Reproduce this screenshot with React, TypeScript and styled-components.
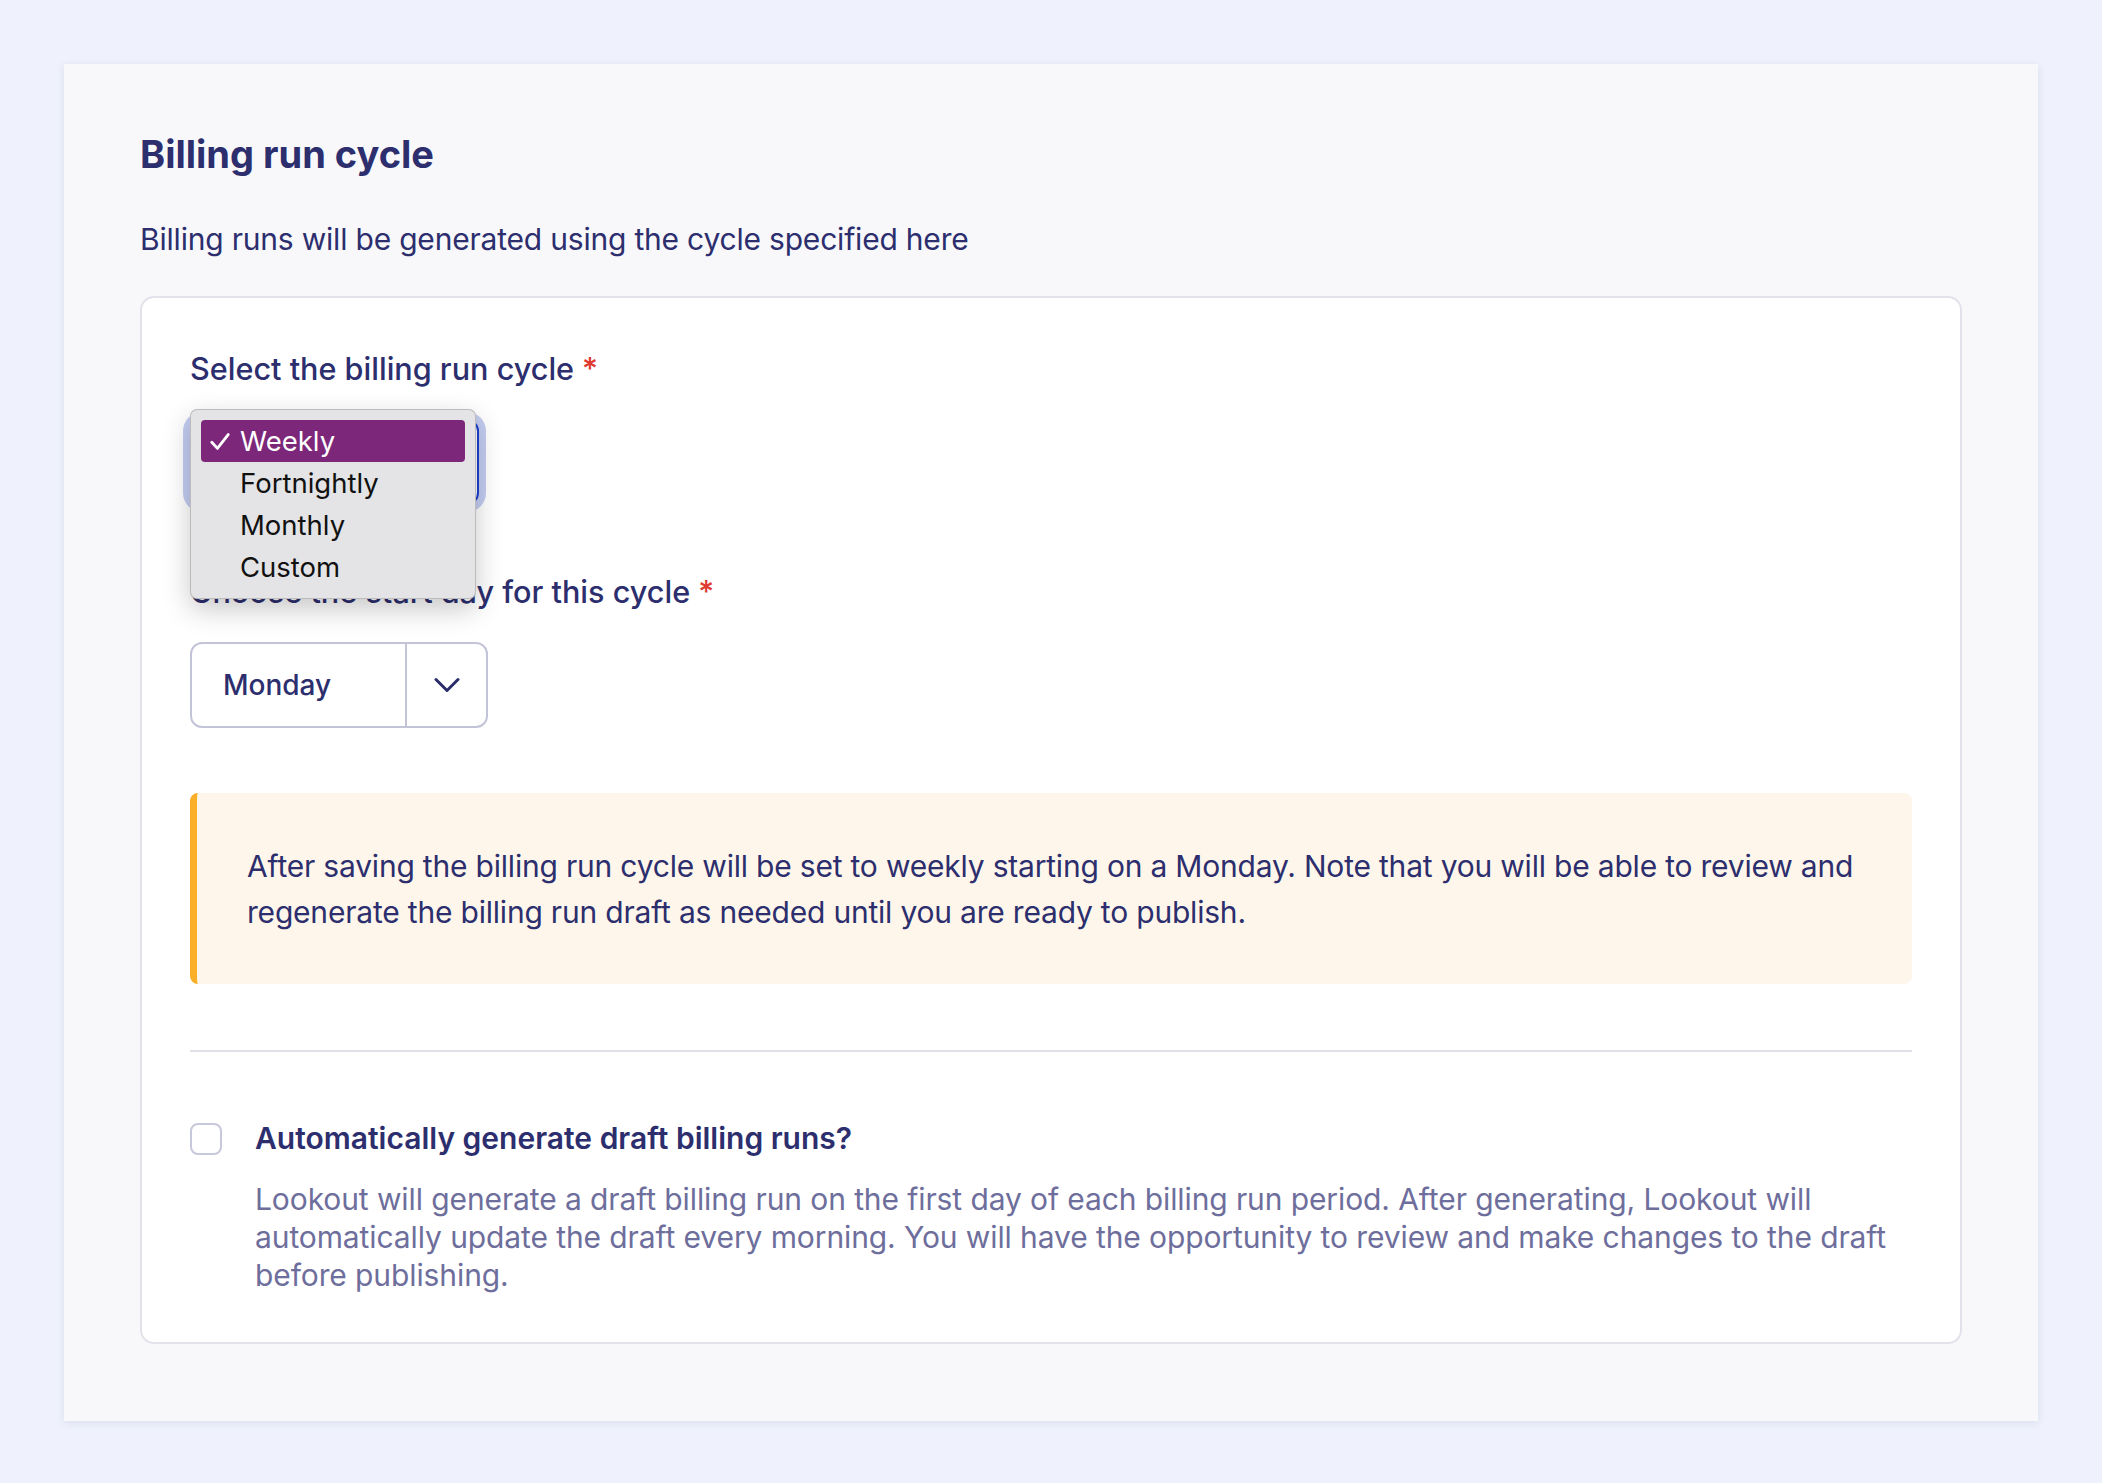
import React from 'react';
import styled, { createGlobalStyle } from 'styled-components';

const GlobalStyle = createGlobalStyle`
  html, body {
    margin: 0;
    padding: 0;
  }
  body {
    background: #eff2fc;
    font-family: Inter, "Noto Sans", sans-serif;
    color: #2c2e6e;
    -webkit-font-smoothing: antialiased;
  }
`;

const Page = styled.div`
  padding: 64px;
`;

const Panel = styled.section`
  background: #f8f8fb;
  box-shadow: 0 2px 8px rgba(40, 50, 120, 0.1);
  padding: 67px 76px 77px;
`;

const Title = styled.h2`
  margin: 0;
  font-size: 38px;
  line-height: 46px;
  font-weight: 700;
`;

const Subtitle = styled.p`
  margin: 42px 0 0;
  font-size: 30px;
  line-height: 40px;
  letter-spacing: -0.2px;
`;

const Card = styled.div`
  margin-top: 37px;
  background: #fff;
  border: 2px solid #e2e2eb;
  border-radius: 14px;
  padding: 51px 48px 48px;
`;

const Field = styled.div`
  display: flex;
  flex-direction: column;
  align-items: flex-start;
  gap: 30px;

  & + & {
    margin-top: 67px;
  }
`;

const Label = styled.label`
  font-size: 30.6px;
  line-height: 40px;
  font-weight: 500;
`;

const Required = styled.span`
  color: #e0392f;
  margin-left: 8px;
`;

const SelectWrap = styled.div`
  position: relative;
`;

const SelectBox = styled.div<{ $width: number; $focused?: boolean }>`
  box-sizing: border-box;
  width: ${({ $width }) => $width}px;
  height: 86px;
  display: grid;
  grid-template-columns: 1fr 79px;
  background: #fff;
  border: 2px solid ${({ $focused }) => ($focused ? '#1d3fd0' : '#c4c4d9')};
  border-radius: 12px;
  box-shadow: ${({ $focused }) => ($focused ? '0 0 0 7px #c3cdf1' : 'none')};
`;

const SelectValue = styled.span`
  display: flex;
  align-items: center;
  padding-left: 31px;
  font-size: 28px;
  font-weight: 500;
  border-right: 2px solid #c4c4d9;
`;

const SelectCaret = styled.span`
  display: flex;
  align-items: center;
  justify-content: center;
  color: #2b2d6b;
`;

const Popup = styled.ul`
  position: absolute;
  top: -10px;
  left: 0;
  z-index: 2;
  box-sizing: border-box;
  width: 286px;
  margin: 0;
  padding: 10px;
  list-style: none;
  background: #e4e4e6;
  border: 1px solid rgba(0, 0, 0, 0.18);
  border-radius: 7px;
  box-shadow: 0 10px 28px rgba(0, 0, 0, 0.22);
  font-family: Inter, "Liberation Sans", sans-serif;
`;

const Option = styled.li<{ $active?: boolean }>`
  position: relative;
  height: 42px;
  display: flex;
  align-items: center;
  padding-left: 39px;
  border-radius: 4px;
  font-size: 27.5px;
  color: ${({ $active }) => ($active ? '#fff' : '#111')};
  background: ${({ $active }) => ($active ? '#7c2779' : 'transparent')};
`;

const Check = styled.svg`
  position: absolute;
  left: 9px;
  top: 13px;
`;

const Notice = styled.div`
  margin-top: 65px;
  background: #fef6ea;
  border-left: 7px solid #fbae27;
  border-radius: 8px;
  padding: 50px 40px 49px 50px;
  font-size: 30px;
  line-height: 46px;
  letter-spacing: -0.2px;
`;

const Divider = styled.hr`
  margin: 66px 0 0;
  border: 0;
  height: 2px;
  background: #e0e0e8;
`;

const CheckRow = styled.div`
  margin-top: 66px;
  display: grid;
  grid-template-columns: 32px 1fr;
  column-gap: 33px;
  row-gap: 22px;
`;

const CheckBox = styled.span`
  box-sizing: border-box;
  width: 32px;
  height: 32px;
  margin-top: 5px;
  border: 2px solid #c8c8dc;
  border-radius: 8px;
  background: #fff;
`;

const CheckTitle = styled.div`
  font-size: 30px;
  line-height: 40px;
  font-weight: 600;
`;

const CheckDesc = styled.p`
  grid-column: 2;
  margin: 0;
  font-size: 30px;
  line-height: 38px;
  letter-spacing: -0.1px;
  color: #6e6e9c;
`;

const options = ['Weekly', 'Fortnightly', 'Monthly', 'Custom'];

const Chevron = () => (
  <svg width="26" height="16" viewBox="0 0 26 16" fill="none">
    <path d="M2 2.5l11 11 11-11" stroke="currentColor" strokeWidth="3" strokeLinecap="round" strokeLinejoin="round" />
  </svg>
);

const App = () => (
  <Page>
    <GlobalStyle />
    <Panel>
      <Title>Billing run cycle</Title>
      <Subtitle>Billing runs will be generated using the cycle specified here</Subtitle>
      <Card>
        <Field>
          <Label>
            Select the billing run cycle<Required>*</Required>
          </Label>
          <SelectWrap>
            <SelectBox $width={289} $focused>
              <SelectValue>Weekly</SelectValue>
              <SelectCaret>
                <Chevron />
              </SelectCaret>
            </SelectBox>
            <Popup>
              {options.map((option, i) => (
                <Option key={option} $active={i === 0}>
                  {i === 0 && (
                    <Check width="20" height="17" viewBox="0 0 20 17" fill="none">
                      <path d="M1.8 9.2l5.6 6.2L18.2 1.6" stroke="#fff" strokeWidth="2.8" strokeLinecap="round" strokeLinejoin="round" />
                    </Check>
                  )}
                  {option}
                </Option>
              ))}
            </Popup>
          </SelectWrap>
        </Field>
        <Field>
          <Label>
            Choose the start day for this cycle<Required>*</Required>
          </Label>
          <SelectBox $width={298}>
            <SelectValue>Monday</SelectValue>
            <SelectCaret>
              <Chevron />
            </SelectCaret>
          </SelectBox>
        </Field>
        <Notice>
          After saving the billing run cycle will be set to weekly starting on a Monday. Note that you will be able to
          review and regenerate the billing run draft as needed until you are ready to publish.
        </Notice>
        <Divider />
        <CheckRow>
          <CheckBox />
          <CheckTitle>Automatically generate draft billing runs?</CheckTitle>
          <CheckDesc>
            Lookout will generate a draft billing run on the first day of each billing run period. After generating,
            Lookout will automatically update the draft every morning. You will have the opportunity to review and make
            changes to the draft before publishing.
          </CheckDesc>
        </CheckRow>
      </Card>
    </Panel>
  </Page>
);

export default App;
